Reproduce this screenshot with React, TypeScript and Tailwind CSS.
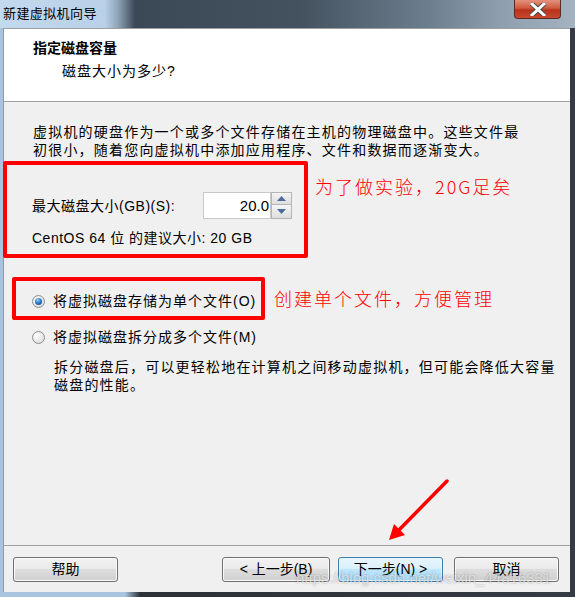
import React from "react";

const cjk = { fontFamily: '"Liberation Sans", "Noto Sans CJK SC", sans-serif' };

function Btn({ children, primary = false, w = "w-[105px]" }: { children: React.ReactNode; primary?: boolean; w?: string }) {
  return (
    <div
      className={`${w} h-[25px] rounded-[3px] border flex items-center justify-center text-[14px] text-black ${
        primary
          ? "border-[#3c7fb1] bg-[linear-gradient(to_bottom,#eaf6fd_0%,#d9f0fc_45%,#bee6fd_50%,#a7d9f5_100%)] shadow-[inset_0_0_0_1px_#e6f4fc]"
          : "border-[#707070] bg-[linear-gradient(to_bottom,#f2f2f2_0%,#ebebeb_45%,#dddddd_50%,#cfcfcf_100%)] shadow-[inset_0_0_0_1px_#fafafa]"
      }`}
    >
      {children}
    </div>
  );
}

function Radio({ checked }: { checked: boolean }) {
  return (
    <div className="w-[13px] h-[13px] rounded-full border border-[#8e8f8f] bg-[radial-gradient(circle_at_35%_35%,#ffffff,#d4d4d4)] flex items-center justify-center">
      {checked && (
        <div className="w-[7px] h-[7px] rounded-full bg-[radial-gradient(circle_at_40%_30%,#9fd6fa_0%,#2a7ec7_45%,#0d3d78_100%)]" />
      )}
    </div>
  );
}

export default function App() {
  return (
    <div
      className="relative w-[575px] h-[597px] overflow-hidden flex flex-col bg-[linear-gradient(to_right,#a9c4df_0px,#a9c4df_125px,#2c3137_140px,#353b42_575px)]"
      style={cjk}
    >
      {/* title bar */}
      <div className="h-[28px] flex items-start bg-[linear-gradient(to_right,#c3d9ee_0px,#b8d0e8_105px,#8fa4b8_118px,#3b4855_135px,#44525f_300px,#6d7e8e_430px,#8e9eae_500px,#a5b3c0_575px)]">
        <div className="pl-[3px] pt-[5px] text-[13px] leading-[18px] tracking-[0.4px] text-black">新建虚拟机向导</div>
        <div className="flex-1" />
        <div className="mr-[14px] w-[47px] h-[19px] rounded-b-[4px] border border-t-0 border-[#5b2b22] bg-[linear-gradient(to_bottom,#e3937f_0%,#cf5a3f_45%,#b8321b_55%,#c9482f_100%)] flex items-center justify-center">
          <svg width="16" height="13" viewBox="0 0 16 13">
            <path d="M2 1 L14 12 M14 1 L2 12" stroke="#4a4a4a" strokeWidth="5" strokeLinecap="square" />
            <path d="M2 1 L14 12 M14 1 L2 12" stroke="#ffffff" strokeWidth="3" strokeLinecap="square" />
          </svg>
        </div>
      </div>

      {/* window content */}
      <div className="flex-1 ml-[3px] mr-[5px] mb-[5px] flex flex-col bg-[#f0f0f0] border-l border-[#8f9ba8]">
        {/* header */}
        <div className="h-[74px] bg-white border-t border-b border-[#a0a0a0] pt-[10px]">
          <div className="pl-[29px] text-[14px] leading-[18px] font-bold text-black">指定磁盘容量</div>
          <div className="pl-[58px] pt-[5px] text-[14px] leading-[18px] tracking-[1px] text-black">磁盘大小为多少?</div>
        </div>

        {/* body */}
        <div className="flex-1 flex flex-col text-[14px] leading-[18px] text-black tracking-[1.2px]">
          <div className="pl-[29px] pt-[21px]">
            <div>虚拟机的硬盘作为一个或多个文件存储在主机的物理磁盘中。这些文件最</div>
            <div>初很小，随着您向虚拟机中添加应用程序、文件和数据而逐渐变大。</div>
          </div>

          <div className="mt-[33px] pl-[28px] flex items-center h-[27px]">
            <div className="w-[171px] tracking-[0.5px]">最大磁盘大小(GB)(S):</div>
            <div className="w-[68px] h-[27px] bg-white border border-[#c9c9c9] flex items-center justify-end pr-[1px] text-[15px] tracking-normal">
              20.0
            </div>
            <div className="w-[21px] h-[27px] flex flex-col">
              <div className="h-[13px] border border-[#b5b5b5] bg-[linear-gradient(to_bottom,#f5f5f5,#dedede)] flex items-center justify-center">
                <svg width="9" height="5" viewBox="0 0 9 5"><path d="M0 5 L4.5 0 L9 5 Z" fill="#4f6a9c" /></svg>
              </div>
              <div className="h-[14px] border border-t-0 border-[#b5b5b5] bg-[linear-gradient(to_bottom,#f5f5f5,#dedede)] flex items-center justify-center">
                <svg width="9" height="5" viewBox="0 0 9 5"><path d="M0 0 L4.5 5 L9 0 Z" fill="#4f6a9c" /></svg>
              </div>
            </div>
          </div>

          <div className="mt-[10px] pl-[28px] tracking-[0.5px]">CentOS 64 位 的建议大小: 20 GB</div>

          <div className="mt-[45px] pl-[28px] flex items-center gap-[8px]">
            <Radio checked />
            <div className="tracking-[1px]">将虚拟磁盘存储为单个文件(O)</div>
          </div>
          <div className="mt-[18px] pl-[28px] flex items-center gap-[8px]">
            <Radio checked={false} />
            <div className="tracking-[1px]">将虚拟磁盘拆分成多个文件(M)</div>
          </div>

          <div className="mt-[12px] pl-[50px]">
            <div>拆分磁盘后，可以更轻松地在计算机之间移动虚拟机，但可能会降低大容量</div>
            <div>磁盘的性能。</div>
          </div>
        </div>

        {/* footer */}
        <div className="h-[47px] border-t border-[#a0a0a0] flex items-start pt-[11px] pl-[9px] pr-[11px]">
          <Btn>帮助</Btn>
          <div className="flex-1" />
          <Btn w="w-[108px]">&lt; 上一步(B)</Btn>
          <div className="w-[8px]" />
          <Btn primary>下一步(N) &gt;</Btn>
          <div className="w-[11px]" />
          <Btn>取消</Btn>
        </div>
      </div>

      {/* annotations */}
      <div className="absolute left-[3px] top-[161px] w-[305px] h-[97px] border-[4px] border-[#ff0000] rounded-[2px]" />
      <div className="absolute left-[12px] top-[277px] w-[253px] h-[43px] border-[4px] border-[#ff0000] rounded-[2px]" />
      <div className="absolute left-[315px] top-[175px] text-[18px] leading-[22px] tracking-[2px] text-[#ff0000]" style={{ fontFamily: '"Noto Sans CJK SC", sans-serif', fontWeight: 300 }}>
        为了做实验，20G足矣
      </div>
      <div className="absolute left-[274px] top-[287px] text-[18px] leading-[22px] tracking-[2px] text-[#ff0000]" style={{ fontFamily: '"Noto Sans CJK SC", sans-serif', fontWeight: 300 }}>
        创建单个文件，方便管理
      </div>
      <svg className="absolute left-[380px] top-[472px]" width="75" height="75" viewBox="0 0 75 75">
        <path d="M67 9 L17 60" stroke="#ff0000" strokeWidth="3.5" strokeLinecap="round" />
        <path d="M9 68 L14 52 L25 63 Z" fill="#ff0000" />
      </svg>
      <div
        className="absolute left-[296px] top-[568px] text-[15px] leading-[20px] text-white/60 [text-shadow:0_0_2px_rgba(0,0,0,0.35)]"
        style={{ fontFamily: '"Liberation Sans", sans-serif' }}
      >
        https://blog.csdn.net/weixin_44816331
      </div>
    </div>
  );
}
